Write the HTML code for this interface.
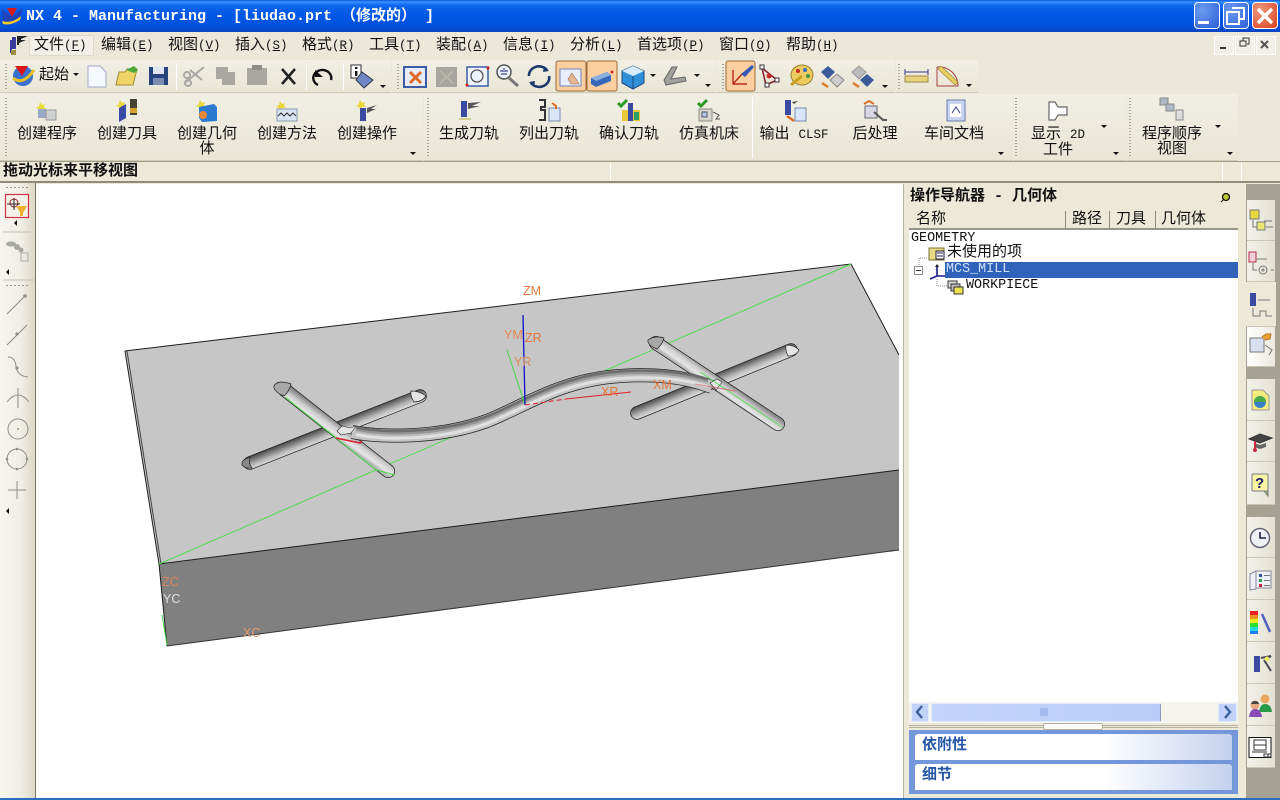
<!DOCTYPE html>
<html><head><meta charset="utf-8"><title>NX 4 - Manufacturing</title>
<style>
html,body{margin:0;padding:0;width:1280px;height:800px;overflow:hidden;background:#ece9d8}
div{position:absolute;box-sizing:border-box}
.t{font:15px/16px "Liberation Mono","Noto Sans CJK SC",monospace;color:#111;white-space:pre;margin-top:2px}
.t i{font:12.5px/16px "Liberation Mono",monospace}
.c{text-align:center;transform:translateX(-50%)}
.b{font-weight:bold}
.band{background:linear-gradient(#f1efe4,#e9e6d6);border-bottom:1px solid #cfccba}
.grip{width:2px;background:repeating-linear-gradient(#a9a693 0 1px,transparent 1px 3px)}
.sep{width:1px;background:#c8c5b2;border-right:1px solid #fff}
.tab{left:1247px;width:28px;background:linear-gradient(90deg,#f3f2ea,#e4e1d2);border-bottom:1px solid #c9c6b4}
svg{position:absolute;left:0;top:0}
u{text-decoration:underline}
</style></head><body>
<!-- title bar -->
<div style="left:0;top:0;width:1280px;height:32px;background:linear-gradient(#0a56d8 0,#3a93ff 2px,#1068ee 5px,#0058e6 14px,#0052dc 26px,#0a42c4 32px)"></div>
<div class="t b" style="left:26px;top:7px;color:#fff">NX 4 - Manufacturing - [liudao.prt （修改的） ]</div>
<div style="left:1194px;top:2px;width:26px;height:27px;border:1px solid #fff;border-radius:4px;background:radial-gradient(circle at 30% 30%,#6d9bf0,#2a5fd8)"></div>
<div style="left:1223px;top:2px;width:26px;height:27px;border:1px solid #fff;border-radius:4px;background:radial-gradient(circle at 30% 30%,#6d9bf0,#2a5fd8)"></div>
<div style="left:1252px;top:2px;width:26px;height:27px;border:1px solid #fff;border-radius:4px;background:radial-gradient(circle at 30% 30%,#f09a80,#d8401c)"></div>
<!-- menu -->
<div style="left:0;top:32px;width:1280px;height:28px;background:#ebe8da"></div>
<div style="left:29px;top:35px;width:65px;height:21px;background:#f1efe6;border:1px solid #dedbca;border-radius:2px"></div>
<div class="t" style="left:34px;top:36px">文件<i>(<u>F</u>)</i></div>
<div class="t" style="left:101px;top:36px">编辑<i>(<u>E</u>)</i></div>
<div class="t" style="left:168px;top:36px">视图<i>(<u>V</u>)</i></div>
<div class="t" style="left:235px;top:36px">插入<i>(<u>S</u>)</i></div>
<div class="t" style="left:302px;top:36px">格式<i>(<u>R</u>)</i></div>
<div class="t" style="left:369px;top:36px">工具<i>(<u>T</u>)</i></div>
<div class="t" style="left:436px;top:36px">装配<i>(<u>A</u>)</i></div>
<div class="t" style="left:503px;top:36px">信息<i>(<u>I</u>)</i></div>
<div class="t" style="left:570px;top:36px">分析<i>(<u>L</u>)</i></div>
<div class="t" style="left:637px;top:36px">首选项<i>(<u>P</u>)</i></div>
<div class="t" style="left:719px;top:36px">窗口<i>(<u>O</u>)</i></div>
<div class="t" style="left:786px;top:36px">帮助<i>(<u>H</u>)</i></div>
<div style="left:1214px;top:36px;width:20px;height:19px;background:#f1efe6;border:1px solid #fff"></div>
<div style="left:1235px;top:36px;width:20px;height:19px;background:#f1efe6;border:1px solid #fff"></div>
<div style="left:1256px;top:36px;width:20px;height:19px;background:#f1efe6;border:1px solid #fff"></div>
<!-- toolbars -->
<div style="left:0;top:59px;width:1280px;height:103px;background:#ebe8da"></div>
<div class="band" style="left:0;top:60px;width:391px;height:33px"></div>
<div class="band" style="left:392px;top:60px;width:324px;height:33px"></div>
<div class="band" style="left:717px;top:60px;width:178px;height:33px"></div>
<div class="band" style="left:896px;top:60px;width:82px;height:33px"></div>
<div class="grip" style="left:5px;top:64px;height:26px"></div>
<div class="grip" style="left:397px;top:64px;height:26px"></div>
<div class="grip" style="left:722px;top:64px;height:26px"></div>
<div class="grip" style="left:898px;top:64px;height:26px"></div>
<div class="sep" style="left:176px;top:63px;height:27px"></div>
<div class="sep" style="left:306px;top:63px;height:27px"></div>
<div class="sep" style="left:343px;top:63px;height:27px"></div>
<div class="t" style="left:39px;top:66px">起始</div>
<div class="band" style="left:0;top:94px;width:423px;height:67px"></div>
<div class="band" style="left:424px;top:94px;width:589px;height:67px"></div>
<div class="band" style="left:1014px;top:94px;width:112px;height:67px"></div>
<div class="band" style="left:1127px;top:94px;width:111px;height:67px"></div>
<div class="grip" style="left:5px;top:98px;height:58px"></div>
<div class="grip" style="left:427px;top:98px;height:58px"></div>
<div class="grip" style="left:1015px;top:98px;height:58px"></div>
<div class="grip" style="left:1129px;top:98px;height:58px"></div>
<div class="sep" style="left:752px;top:97px;height:61px"></div>
<div class="t c" style="left:47px;top:125px">创建程序</div>
<div class="t c" style="left:127px;top:125px">创建刀具</div>
<div class="t c" style="left:207px;top:125px;line-height:15px">创建几何
体</div>
<div class="t c" style="left:287px;top:125px">创建方法</div>
<div class="t c" style="left:367px;top:125px">创建操作</div>
<div class="t c" style="left:469px;top:125px">生成刀轨</div>
<div class="t c" style="left:549px;top:125px">列出刀轨</div>
<div class="t c" style="left:629px;top:125px">确认刀轨</div>
<div class="t c" style="left:709px;top:125px">仿真机床</div>
<div class="t c" style="left:794px;top:125px">输出 <i>CLSF</i></div>
<div class="t c" style="left:875px;top:125px">后处理</div>
<div class="t c" style="left:954px;top:125px">车间文档</div>
<div class="t c" style="left:1058px;top:125px;line-height:15px;text-align:center">显示 <i>2D</i>
工件</div>
<div class="t c" style="left:1172px;top:125px;line-height:15px;text-align:center">程序顺序
视图</div>
<!-- status -->
<div style="left:0;top:161px;width:1280px;height:1px;background:#a09d8a"></div>
<div style="left:0;top:162px;width:1280px;height:21px;background:#ece9d8;border-bottom:2px solid #8f8c7c"></div>
<div class="sep" style="left:610px;top:163px;height:18px"></div>
<div class="sep" style="left:1222px;top:163px;height:18px"></div>
<div class="sep" style="left:1241px;top:163px;height:18px"></div>
<div class="t b" style="left:3px;top:162px">拖动光标来平移视图</div>
<!-- left bar -->
<div style="left:0;top:183px;width:36px;height:617px;background:linear-gradient(90deg,#f6f5ef,#f0eee4 60%,#d9d6c4)"></div>
<div style="left:35px;top:183px;width:1px;height:615px;background:#77756a"></div>
<!-- canvas -->
<div style="left:36px;top:184px;width:868px;height:614px;background:#fff"></div>
<svg width="1280" height="800" viewBox="0 0 1280 800">
<defs>
<linearGradient id="a" gradientUnits="userSpaceOnUse" x1="340" y1="424.500" x2="332" y2="435.500"><stop offset="0" stop-color="#8c8c8c"/><stop offset=".4" stop-color="#cfcfcf"/><stop offset=".75" stop-color="#e6e6e6"/><stop offset="1" stop-color="#b4b4b4"/></linearGradient>
<linearGradient id="b" gradientUnits="userSpaceOnUse" x1="332.400" y1="423.500" x2="337.600" y2="436.500"><stop offset="0" stop-color="#484848"/><stop offset=".6" stop-color="#b8b8b8"/><stop offset="1" stop-color="#e6e6e6"/></linearGradient>
<linearGradient id="c" gradientUnits="userSpaceOnUse" x1="721" y1="377.700" x2="713" y2="389"><stop offset="0" stop-color="#8c8c8c"/><stop offset=".4" stop-color="#cfcfcf"/><stop offset=".75" stop-color="#e6e6e6"/><stop offset="1" stop-color="#b4b4b4"/></linearGradient>
<linearGradient id="d" gradientUnits="userSpaceOnUse" x1="713.300" y1="374.200" x2="718.700" y2="387.200"><stop offset="0" stop-color="#484848"/><stop offset=".6" stop-color="#b8b8b8"/><stop offset="1" stop-color="#e6e6e6"/></linearGradient>
</defs>
<!-- title logo -->
<path d="M2,9L12,17L22,8L20,20Q10,26 3,23Z" fill="#2244b8"/><path d="M7,8L17,8L12,17Z" fill="#d81c1c"/><path d="M2,21Q12,24 21,16L20,20Q10,26 3,24Z" fill="#f0c828"/>
<!-- model -->
<polygon points="125,351 851,264 899,355 899,470 159,564" fill="#c6c6c6"/>
<polygon points="159,564 899,470 899,550 167,646" fill="#808080"/>
<g fill="none" stroke="#1c1c1c" stroke-width="1">
<path d="M899,355L851,264L125,351L159,564L899,470M159,564L167,646"/>
<path d="M167,646L899,550" stroke="#333"/>
<path d="M127,351L161,564" stroke="#444"/>
</g>
<path d="M159,564L851,264" stroke="#4fdc4f" stroke-width="1" fill="none"/>
<!-- left cross -->
<g stroke-linecap="round" fill="none">
<path d="M250,463L420,396" stroke="#222" stroke-width="13.500"/><path d="M250,463L420,396" stroke="url(#b)" stroke-width="12"/>
<path d="M285,390L388,471" stroke="#222" stroke-width="14"/><path d="M285,390L388,471" stroke="url(#a)" stroke-width="12.500"/>
<!-- right cross -->
<path d="M637,413L791,350" stroke="#222" stroke-width="13.500"/><path d="M637,413L791,350" stroke="url(#d)" stroke-width="12"/>
<path d="M656,343L778,424" stroke="#222" stroke-width="14"/><path d="M656,343L778,424" stroke="url(#c)" stroke-width="12.500"/>
</g>
<g fill="none" stroke-linecap="butt">
<path d="M352,432C385,438 440,438 487,421C525,406 560,380 620,376C650,374 680,375 712,387" stroke="#222" stroke-width="14"/>
<path d="M352,432C385,438 440,438 487,421C525,406 560,380 620,376C650,374 680,375 712,387" stroke="#c4c4c4" stroke-width="12.500"/>
<path transform="translate(0,-4.500)" d="M356,432C385,438 440,438 487,421C525,406 560,380 620,376C650,374 680,375 708,384" stroke="#6e6e6e" stroke-width="3"/>
<path transform="translate(0,-2)" d="M356,432C385,438 440,438 487,421C525,406 560,380 620,376C650,374 680,375 708,384" stroke="#969696" stroke-width="2.500"/>
<path transform="translate(0,0)" d="M356,432C385,438 440,438 487,421C525,406 560,380 620,376C650,374 680,375 708,384" stroke="#bcbcbc" stroke-width="2"/>
<path transform="translate(0,2.500)" d="M356,432C385,438 440,438 487,421C525,406 560,380 620,376C650,374 680,375 708,384" stroke="#e0e0e0" stroke-width="3"/>
</g>
<g fill="#dcdcdc" stroke="#222" stroke-width=".7">
<path d="M291,384Q286,382 280,382Q273,384 274,388Q276,393 284,396Q289,392 291,384Z" fill="#a8a8a8"/>
<path d="M411,391Q420,391 426,396Q422,402 414,402Q410,396 411,391Z" fill="#e4e4e4"/>
<path d="M250,457Q241,460 242,465Q245,469 252,468Q248,463 250,457Z" fill="#888"/>
<path d="M664,338Q655,335 648,340Q647,345 657,349Q662,345 664,338Z" fill="#a8a8a8"/>
<path d="M786,345Q795,345 799,350Q796,356 788,356Q785,350 786,345Z" fill="#e4e4e4"/>
</g>
<path d="M337,431L342,426L350,428L356,426L351,433L341,435Z" fill="#e4e4e4" stroke="#333" stroke-width=".6"/>
<path d="M710,383L717,379L722,382L716,390Z" fill="#e4e4e4" stroke="#333" stroke-width=".6"/>
<g fill="none" stroke-width="1">
<path d="M285,397L376,470L395,475" stroke="#49d849"/>
<path d="M700,372L783,428" stroke="#49d849" opacity=".8"/>
<path d="M162,615L167,645" stroke="#49d849"/>
<path d="M507,350L525,405" stroke="#49d849"/>
<path d="M523,315L525,405" stroke="#1010c8" stroke-width="1.300"/>
<path d="M525,405L566,399" stroke="#e0202c" stroke-dasharray="5 3"/><path d="M566,399L631,392" stroke="#e0202c"/>
<path d="M336,438L360,443L362,441" stroke="#d8202c" stroke-width="1.500"/>
<path d="M695,384L735,391" stroke="#d8202c" opacity=".5"/>
</g>
<g font-family="Liberation Sans,sans-serif" font-size="12.500" fill="#e2763c">
<text x="523" y="295">ZM</text><text x="504" y="339" fill="#e08a58">YM</text><text x="525" y="342">ZR</text><text x="514" y="366" fill="#d88a5c">YR</text><text x="601" y="396">XR</text><text x="653" y="389">XM</text>
<text x="162" y="586" fill="#d8855a">ZC</text><text x="163" y="603" fill="#e0e0e0">YC</text><text x="243" y="637" fill="#dd9a70">XC</text>
</g>

<!-- logo/menu icons -->
<path d="M12,37h4v12h-4zM10,40h2v13h-2z" fill="#3a3a9a"/><path d="M17,36h11l-7,3v1h5l-7,3v2h-2z" fill="#222"/><path d="M11,50h5v5h-5z" fill="#9a9040"/>
<!-- row1 -->
<circle cx="23" cy="76" r="10" fill="#3b6fd0"/><path d="M13,78Q23,86 34,70" stroke="#e8c020" stroke-width="3" fill="none"/><path d="M15,66L28,66L22,76Z" fill="#d81818"/>
<path d="M73,73h6l-3,3z" fill="#111"/>
<path d="M88,66h12l6,6v15H88z" fill="#f6f8ff" stroke="#a0a8c8"/>
<path d="M116,85l3-13h6l2-3h10l-4,16z" fill="#f0d468" stroke="#a08a30"/><path d="M126,70l8-4 4,4-4,3z" fill="#4ea83a"/>
<rect x="149" y="67" width="19" height="18" fill="#28447e"/><rect x="153" y="67" width="11" height="7" fill="#dfe6f0"/><rect x="153" y="78" width="11" height="7" fill="#7a8cb0"/>
<g stroke="#a8a8a4" stroke-width="2" fill="none"><path d="M186,82L204,67M190,70L202,80"/><circle cx="188" cy="83" r="3"/><circle cx="187" cy="75" r="3"/></g>
<path d="M216,67h12v5h7v13H222v-6h-6z" fill="#a9a8a0"/>
<path d="M247,68h20v17H247z" fill="#a9a8a0"/><rect x="252" y="65" width="10" height="5" fill="#8e8d86"/>
<path d="M282,69L295,84M295,69L282,84" stroke="#222" stroke-width="2.600"/>
<path d="M318,83A9,8 0 1 1 331,78" stroke="#111" stroke-width="2.400" fill="none" transform="translate(0,2)"/><path d="M315,70l8,7h-8z" fill="#111"/>
<rect x="351" y="65" width="10" height="13" fill="#fff" stroke="#333"/><rect x="355" y="67" width="2.400" height="2" fill="#111"/><rect x="355" y="71" width="2.400" height="5" fill="#111"/><path d="M362,72L373,80L364,88L356,80Z" fill="#6e88c8" stroke="#334"/>
<path d="M380,85h6l-3,3z" fill="#111"/>
<rect x="404" y="67" width="22" height="20" fill="#e6ecf8" stroke="#3a5ca8" stroke-width="2"/><path d="M410,72L421,83M421,72L410,83" stroke="#e06a28" stroke-width="3"/>
<rect x="436" y="67" width="21" height="20" fill="#a6a69e"/><path d="M440,71L453,83M453,71L440,83" stroke="#b8b8a8" stroke-width="2"/>
<rect x="467" y="67" width="21" height="19" fill="#eef2fb" stroke="#3a5ca8" stroke-width="1.500"/><circle cx="477" cy="76" r="6" fill="none" stroke="#555" stroke-width="1.300"/><circle cx="467" cy="85" r="1.500" fill="#d02020"/><circle cx="488" cy="68" r="1.500" fill="#d02020"/>
<circle cx="504" cy="72" r="7" fill="#eef2fb" stroke="#555" stroke-width="1.500"/><path d="M500,71h8M504,68v2M501,74h6" stroke="#1a1a8a"/><path d="M509,78L518,86" stroke="#777" stroke-width="3"/>
<path d="M529,76A10,9 0 0 1 547,70M549,76A10,9 0 0 1 531,83" fill="none" stroke="#1d3a70" stroke-width="2.600"/><path d="M544,66l5,5-6,1zM534,87l-5-5 6-1z" fill="#1d3a70"/>
<rect x="556" y="61" width="30" height="30" rx="2" fill="#fbcf9f" stroke="#9c6a3a"/><rect x="560" y="69" width="21" height="17" fill="#e8eefb" stroke="#6e84b8"/><path d="M572,73l4,6 3,5h-8l-3-5z" fill="#e8b894" stroke="#9a6a48" stroke-width=".6"/>
<rect x="587" y="61" width="30" height="30" rx="2" fill="#fbcf9f" stroke="#9c6a3a"/><path d="M591,78l16-6 4,3v6l-15,6-5-3z" fill="#3568b8"/><path d="M591,78l16-6 4,3-15,6z" fill="#8aaee0"/><circle cx="612" cy="72" r="1.400" fill="#d02020"/>
<path d="M622,71l11-5 11,5v12l-11,6-11-6z" fill="#2f8fd8" stroke="#1c4a7a"/><path d="M622,71l11-5 11,5-11,5z" fill="#d6ecfa"/><path d="M633,76v13" stroke="#1c4a7a"/>
<path d="M650,74h6l-3,3z" fill="#111"/>
<path d="M664,80l8-13h5l-6,12 14-2 1,4-20,4z" fill="#a2a29c" stroke="#666"/>
<path d="M694,74h6l-3,3z" fill="#111"/><path d="M705,84h6l-3,3z" fill="#111"/>
<rect x="726" y="61" width="29" height="30" rx="2" fill="#fbcf9f" stroke="#9c6a3a"/><path d="M733,70V84H747M733,84L743,73" stroke="#b82818" stroke-width="1.400" fill="none"/><path d="M741,74L752,65l2,2-9,10z" fill="#3558b0"/>
<path d="M762,68L777,80L766,85zM762,68L766,85" fill="none" stroke="#8a2030" stroke-width="1.600"/><rect x="760" y="65" width="4" height="4" fill="#fff" stroke="#333"/><rect x="775" y="78" width="4" height="4" fill="#fff" stroke="#333"/><rect x="765" y="83" width="4" height="4" fill="#fff" stroke="#333"/><circle cx="769" cy="76" r="2.500" fill="#c82828"/>
<ellipse cx="802" cy="75" rx="11" ry="10" fill="#eecb60" stroke="#998030"/><circle cx="798" cy="71" r="2" fill="#c82828"/><circle cx="805" cy="70" r="2" fill="#3a6ac8"/><circle cx="808" cy="76" r="2" fill="#3a9a3a"/><path d="M791,85L802,76" stroke="#c8a020" stroke-width="3"/>
<path d="M821,72l7-6 7,6-7,7z" fill="#3c5a9a"/><path d="M830,80l7-6 7,6-7,7z" fill="#ccc" stroke="#888"/><path d="M822,83l6,4" stroke="#e07a28" stroke-width="2.400"/>
<path d="M852,72l7-6 7,6-7,7z" fill="#bbb" stroke="#999"/><path d="M860,80l7-6 7,6-7,7z" fill="#3c5a9a"/><path d="M853,83l6,4" stroke="#e07a28" stroke-width="2.400"/>
<path d="M882,85h6l-3,3z" fill="#111"/>
<rect x="905" y="76" width="23" height="6" fill="#e8d27c" stroke="#9a8a48"/><path d="M905,72h23M905,69v6M928,69v6" stroke="#3a3a8a" fill="none"/>
<path d="M937,67V86H958A19,19 0 0 0 937,67" fill="none" stroke="#a84040"/><path d="M941,66L958,82l-3,3L938,69z" fill="#e8cd60" stroke="#998030" stroke-width=".6"/>
<path d="M966,84h6l-3,3z" fill="#111"/>
<!-- row2 -->
<g>
<path d="M40,102l2 3 3-1-1 3 2 2-4 0-2 3-1-3-3-1 3-2z" fill="#e8d838"/><rect x="38" y="109" width="8" height="9" fill="#9aa8c8"/><rect x="46" y="110" width="10" height="10" fill="#cfd0d0" stroke="#999"/>
<path d="M120,100l2 3 3-1-1 3 2 2-4 0-2 3-1-3-3-1 3-2z" fill="#e8d838"/><path d="M119,108l7-4v14l-7 4z" fill="#3a4aa8"/><rect x="130" y="99" width="7" height="16" fill="#443"/><rect x="130" y="108" width="7" height="5" fill="#d8a030"/>
<path d="M200,100l2 3 3-1-1 3 2 2-4 0-2 3-1-3-3-1 3-2z" fill="#e8d838"/><path d="M199,107l15-3 3,3v14l-15,1-3-4z" fill="#2a7ad0"/><circle cx="203" cy="115" r="4" fill="#e8883a"/>
<path d="M280,101l2 3 3-1-1 3 2 2-4 0-2 3-1-3-3-1 3-2z" fill="#e8d838"/><rect x="277" y="109" width="20" height="12" fill="#d8e4f4" stroke="#8a9ab0"/><path d="M278,116l3-3 3,3 3-3 3,3 3-3 3,3" stroke="#333" fill="none"/>
<path d="M360,100l2 3 3-1-1 3 2 2-4 0-2 3-1-3-3-1 3-2z" fill="#e8d838"/><rect x="360" y="108" width="6" height="13" fill="#3a4aa0"/><path d="M367,108l10-3-6 4h5l-9 4z" fill="#555"/>
<rect x="461" y="101" width="6" height="16" fill="#3a4aa0"/><path d="M468,103l13-1-9 4h8l-12 3z" fill="#555"/><path d="M459,119h12" stroke="#c8c470" stroke-width="1.500"/>
<path d="M539,100h6v7h-4v3h4v10h-6" stroke="#333" stroke-width="2" fill="none"/><rect x="549" y="108" width="11" height="13" fill="#d8e4f8" stroke="#7a8ab0"/><path d="M552,103l4,3v3" stroke="#d86a28" stroke-width="2" fill="none"/>
<path d="M618,103l3,3 6-6" stroke="#2a9a28" stroke-width="3" fill="none"/><rect x="622" y="110" width="18" height="11" fill="#e8c838"/><rect x="628" y="103" width="5" height="18" fill="#3a4aa0"/><rect x="634" y="112" width="5" height="8" fill="#28a068"/>
<path d="M698,103l3,3 6-6" stroke="#2a9a28" stroke-width="3" fill="none"/><rect x="699" y="109" width="13" height="12" fill="#d8d8d0" stroke="#8a8a80"/><rect x="702" y="112" width="5" height="5" fill="#b8c8e8" stroke="#556"/><path d="M713,112l6 3-3 4h4" stroke="#555" fill="none"/>
<rect x="785" y="100" width="6" height="15" fill="#3a4aa0"/><path d="M792,102l6-1-4 3" fill="#444"/><rect x="795" y="108" width="11" height="13" fill="#d8e4f8" stroke="#7a8ab0"/><path d="M787,116l7,5" stroke="#d86a28" stroke-width="2.400"/>
<path d="M864,104l5-3 5 3" stroke="#d8702a" stroke-width="2" fill="none"/><rect x="865" y="106" width="12" height="12" fill="#d8d8e4" stroke="#667"/><path d="M874,112l9,8h4" stroke="#555" fill="none" stroke-width="2"/>
<rect x="947" y="100" width="18" height="21" fill="#c8d4f0" stroke="#6a7ab0"/><rect x="950" y="104" width="11" height="13" fill="#fff"/><path d="M952,113l4-6 4,6" stroke="#2a3a8a" fill="none"/>
<path d="M1049,102h6l3,5h9v8h-9l-3,5h-6z" fill="#fff" stroke="#666" stroke-width="1.200"/>
<rect x="1160" y="98" width="8" height="7" fill="#b0b8c8" stroke="#888"/><rect x="1166" y="104" width="8" height="7" fill="#b0b8c8" stroke="#888"/><rect x="1176" y="110" width="7" height="10" fill="#ddd" stroke="#888"/>
</g>
<g fill="#111"><path d="M410,152h6l-3,3zM998,152h6l-3,3zM1113,152h6l-3,3zM1227,152h6l-3,3zM1101,125h6l-3,3zM1215,125h6l-3,3z"/></g>
<g stroke="#333" fill="none"><path d="M1220,48h6" stroke-width="2"/><path d="M1240,46h6v-5h-6zM1243,41v-3h6v6h-2"/><path d="M1261,41l7,7M1268,41l-7,7" stroke-width="2" stroke="#555"/></g>
<rect x="1198" y="21" width="11" height="3" fill="#fff"/>
<g stroke="#fff" stroke-width="2" fill="none"><rect x="1227" y="12" width="12" height="12"/><path d="M1232,8h12v11h-4"/></g>
<path d="M1258,9L1272,23M1272,9L1258,23" stroke="#fff" stroke-width="3.400"/>
</svg>
<!-- right panel -->
<div style="left:903px;top:184px;width:343px;height:616px;background:#ece9d8;border-left:1px solid #b8b5a4"></div>
<div style="left:1246px;top:184px;width:34px;height:616px;background:#a5a293"></div>
<div class="t b" style="left:910px;top:187px">操作导航器 - 几何体</div>
<div style="left:909px;top:211px;width:329px;height:19px;background:#ece9d8;border-bottom:2px solid #98958a"></div>
<div class="t" style="left:916px;top:210px">名称</div>
<div class="t" style="left:1072px;top:210px">路径</div>
<div class="t" style="left:1116px;top:210px">刀具</div>
<div class="t" style="left:1161px;top:210px">几何体</div>
<div style="left:1065px;top:211px;width:1px;height:17px;background:#8f8c7c"></div>
<div style="left:1109px;top:211px;width:1px;height:17px;background:#8f8c7c"></div>
<div style="left:1155px;top:211px;width:1px;height:17px;background:#8f8c7c"></div>
<div style="left:909px;top:230px;width:329px;height:472px;background:#fff"></div>
<div style="left:945px;top:262px;width:293px;height:16px;background:#2f62b8"></div>
<div class="t" style="left:911px;top:229px;font-size:13.400px">GEOMETRY</div>
<div class="t" style="left:947px;top:243px">未使用的项</div>
<div class="t" style="left:946px;top:260px;font-size:13.400px;color:#cfe0ff">MCS_MILL</div>
<div class="t" style="left:966px;top:276px;font-size:13.400px">WORKPIECE</div>
<div style="left:909px;top:702px;width:329px;height:21px;background:#f5f4ec"></div>
<div style="left:911px;top:703px;width:18px;height:19px;background:#c1d3fb;border:1px solid #e4ebfa;border-radius:2px"></div>
<div style="left:931px;top:703px;width:230px;height:19px;background:linear-gradient(90deg,#c3d5fc,#b9cdf8);border:1px solid #e4ebfa;border-right:1px solid #8e9ab8;border-radius:2px"></div>
<div style="left:1218px;top:703px;width:19px;height:19px;background:#c1d3fb;border:1px solid #e4ebfa;border-radius:2px"></div>
<div style="left:909px;top:725px;width:329px;height:3px;border-top:1px solid #b5b2a2;border-bottom:1px solid #b5b2a2"></div>
<div style="left:1043px;top:723px;width:60px;height:7px;background:#fbfaf4;border:1px solid #b5b2a2;border-radius:2px"></div>
<div style="left:909px;top:730px;width:329px;height:64px;background:#7497dc"></div>
<div style="left:915px;top:734px;width:317px;height:26px;background:linear-gradient(90deg,#fff 60%,#c4d1ee);border-radius:3px 3px 0 0"></div>
<div style="left:915px;top:764px;width:317px;height:26px;background:linear-gradient(90deg,#fff 60%,#c4d1ee);border-radius:3px 3px 0 0"></div>
<div class="t b" style="left:922px;top:736px;color:#2456a8">依附性</div>
<div class="t b" style="left:922px;top:766px;color:#2456a8">细节</div>
<div style="left:0;top:798px;width:1280px;height:2px;background:#2a6ec0"></div>
<!-- tabs -->
<div class="tab" style="top:200px;height:41px"></div>
<div class="tab" style="top:241px;height:41px"></div>
<div class="tab" style="top:282px;height:45px;left:1246px;width:30px;background:#ece9d8"></div>
<div class="tab" style="top:327px;height:40px;background:linear-gradient(90deg,#fff,#ebe9de)"></div>
<div class="tab" style="top:379px;height:42px"></div>
<div class="tab" style="top:421px;height:41px"></div>
<div class="tab" style="top:462px;height:43px"></div>
<div class="tab" style="top:517px;height:41px"></div>
<div class="tab" style="top:558px;height:42px"></div>
<div class="tab" style="top:600px;height:42px"></div>
<div class="tab" style="top:642px;height:42px"></div>
<div class="tab" style="top:684px;height:42px"></div>
<div class="tab" style="top:726px;height:42px"></div>
<svg width="1280" height="800" viewBox="0 0 1280 800">
<!-- left bar icons -->
<g fill="none" stroke="#8f8e84" stroke-width="1">
<path d="M6,187.500h22M6,285.500h22" stroke-dasharray="2 2" stroke="#999"/>
<path d="M3,232h28M3,280h31" stroke="#c6c3b2"/>
<path d="M7,314L25,296M7,345L27,325M8,357Q15,357 16,366Q17,376 28,377M7,402Q18,388 29,402M18,388V408"/>
<circle cx="18" cy="429" r="10"/><circle cx="17" cy="459" r="10"/>
<path d="M8,490H26M17,481V499"/>
</g>
<g fill="#8f8e84"><circle cx="25" cy="296" r="1.800"/><circle cx="17" cy="334" r="1.600"/><circle cx="17" cy="368" r="1.600"/><circle cx="18" cy="429" r="1"/><circle cx="17" cy="449" r="1.300"/><circle cx="7" cy="459" r="1.300"/><circle cx="27" cy="459" r="1.300"/><circle cx="17" cy="469" r="1.300"/></g>
<g fill="#111"><path d="M14,223l3-3v6zM6,272l3-3v6zM6,511l3-3v6z"/></g>
<rect x="5.500" y="194.500" width="23" height="23" fill="#f4f2e8" stroke="#d03048" stroke-width="1.200"/>
<circle cx="14" cy="203" r="4" fill="none" stroke="#b02030"/><path d="M7,204H20M14,198V210" stroke="#222"/><path d="M16,206H27L23,213V216L20,216V212Z" fill="#f0b030"/>
<g fill="#a8a8a2"><ellipse cx="11" cy="244" rx="5" ry="2.500"/><circle cx="17" cy="247" r="3"/><circle cx="21" cy="250" r="2.500"/></g><rect x="21" y="253" width="7" height="8" fill="none" stroke="#aaa"/>
<!-- panel pin, tree -->
<circle cx="1226" cy="197" r="3.500" fill="#b8c838" stroke="#111" stroke-width="1.300"/><path d="M1221,202l3-3" stroke="#111"/>
<path d="M920,258h7M919,258V265M937,279V286H948" stroke="#888" stroke-dasharray="1 1" fill="none"/>
<rect x="914.500" y="266.500" width="8" height="8" fill="#fff" stroke="#888"/><path d="M916,270.500h5" stroke="#333"/>
<rect x="929" y="248" width="15" height="12" fill="#e8d884" stroke="#7a7030"/><rect x="936" y="251" width="8" height="8" fill="#fff" stroke="#223"/><path d="M937,253h6M937,256h6" stroke="#225"/>
<path d="M937,266V276H945M937,276L930,279" stroke="#1a1a8a" stroke-width="1.600" fill="none"/><path d="M937,264l-2,3h4z" fill="#1a1a1a"/>
<rect x="948" y="281" width="9" height="7" fill="#ddd" stroke="#333"/><rect x="951" y="284" width="9" height="7" fill="#bbb" stroke="#333"/><rect x="954" y="287" width="9" height="7" fill="#eee050" stroke="#333"/>
<path d="M922,706l-5,6 5,6M1225,706l5,6-5,6" stroke="#3f5f9a" stroke-width="2.400" fill="none"/>
<path d="M1041,708v8M1043,708v8M1045,708v8M1047,708v8" stroke="#8aa3e0"/>
<!-- tab icons -->
<g fill="none" stroke="#777">
<rect x="1250" y="210" width="9" height="9" fill="#e8d840" stroke="#777"/><rect x="1257" y="222" width="8" height="8" fill="#e8e870" stroke="#777"/><path d="M1264,221h8M1253,220V227H1257M1266,227h7"/>
<rect x="1249" y="252" width="7" height="10" fill="#f0d0d8" stroke="#b03048"/><path d="M1256,259h11M1253,263V270H1257M1271,270h3"/><circle cx="1263" cy="270" r="4"/><circle cx="1263" cy="270" r="1"/>
<rect x="1250" y="293" width="6" height="13" fill="#3a4aa0" stroke="none"/><path d="M1258,300h12M1253,308V316H1260V311H1266V316H1272"/>
<rect x="1250" y="338" width="14" height="14" fill="#d8e0f0" stroke="#777"/><path d="M1262,337l4-3h5l-1,5-5,1" fill="#e8a030" stroke="#c07020"/><path d="M1265,345l7,5-3,5"/>
<path d="M1252,390h11l6,6v14h-17z" fill="#f5ec80" stroke="#999"/><circle cx="1260" cy="402" r="6" fill="#3a80c8" stroke="none"/><path d="M1254,402a6,6 0 0 1 12,0z" fill="#4aa848" stroke="none"/>
<path d="M1249,439l11-5 12,4-12,5z" fill="#444" stroke="#333"/><path d="M1254,443l6,2 6-2v4l-6,2-6-2z" fill="#666" stroke="none"/><path d="M1255,441v10" stroke="#c82840" stroke-width="2"/><circle cx="1255" cy="450" r="2" fill="#c82840" stroke="none"/>
<rect x="1252" y="474" width="16" height="17" rx="1" fill="#f8f4a0" stroke="#778"/><path d="M1264,491l4,5v-5" fill="#9aaa70"/>
<circle cx="1260" cy="538" r="9.500" fill="#eef0f6" stroke="#667" stroke-width="1.500"/><path d="M1260,532V538H1266" stroke="#224" stroke-width="1.600"/>
<path d="M1250,574l6-3v18l-6,1zM1256,571h15v17h-15z" fill="#eef0f6" stroke="#889"/>
<rect x="1259" y="574" width="3" height="3" fill="#3050a0" stroke="none"/><rect x="1259" y="579" width="3" height="3" fill="#30a050" stroke="none"/><rect x="1259" y="584" width="3" height="3" fill="#c82040" stroke="none"/><path d="M1264,575.500h6M1264,580.500h6M1264,585.500h6"/>
<path d="M1262,614L1270,632" stroke="#5060c0" stroke-width="2.500"/>
<rect x="1254" y="656" width="6" height="16" fill="#3a4aa0" stroke="none"/><path d="M1261,658l10-2-6 4M1264,660l7,11" stroke="#445" stroke-width="2"/><circle cx="1267" cy="659" r="2.500" fill="#eee860" stroke="none"/>
<circle cx="1265" cy="699" r="4.500" fill="#e8a860" stroke="none"/><path d="M1259,712q1-8 6-8q6 0 7 8z" fill="#2a9a48" stroke="none"/><circle cx="1255" cy="705" r="4.500" fill="#e8a880" stroke="none"/><path d="M1255,701a4,4 0 0 1 4,3h-8a4,4 0 0 1 4-3" fill="#444" stroke="none"/><path d="M1249,717q1-8 6-8q6 0 7 8z" fill="#8a4ab8" stroke="none"/>
<rect x="1249" y="737.500" width="22" height="20" fill="#fff" stroke="#111"/><path d="M1254,740h12v10h-12zM1254,745h12M1252,752h15" stroke="#333"/><rect x="1264" y="754" width="4" height="3" fill="#fff" stroke="#333"/><rect x="1268" y="754" width="3" height="3" fill="#fff" stroke="#333"/>
</g>
<g><rect x="1250" y="611" width="8" height="4" fill="#e82020"/><rect x="1250" y="615" width="8" height="4" fill="#f09020"/><rect x="1250" y="619" width="8" height="4" fill="#e8e820"/><rect x="1250" y="623" width="8" height="4" fill="#30e030"/><rect x="1250" y="627" width="8" height="4" fill="#20d8d8"/><rect x="1250" y="631" width="8" height="3" fill="#2080f0"/></g>
<text x="1255" y="488" font-family="Liberation Sans,sans-serif" font-weight="bold" font-size="15" fill="#1a1a6a">?</text>
</svg>
</body></html>
